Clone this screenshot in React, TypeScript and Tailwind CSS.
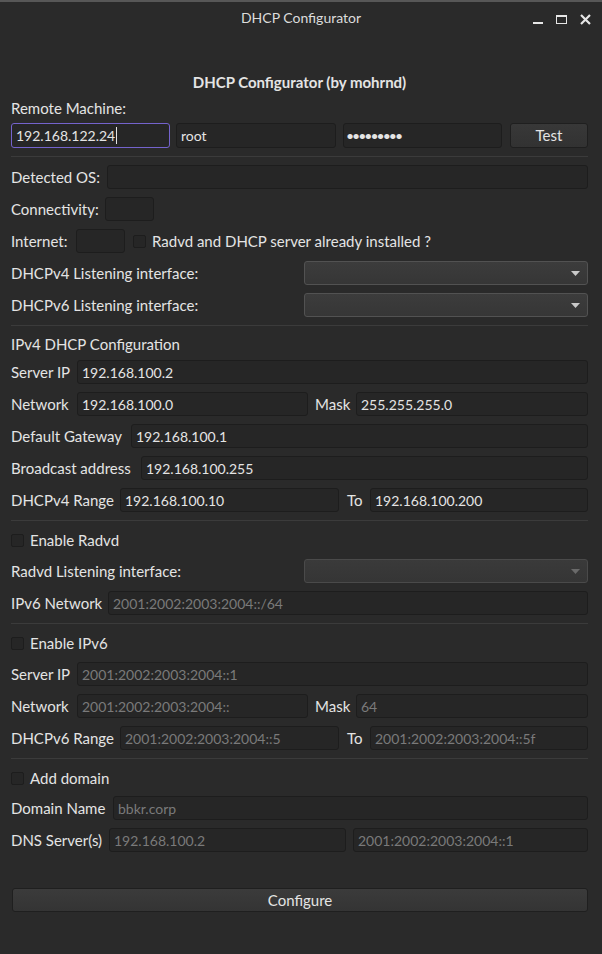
import React from "react";

const font = { fontFamily: "Lato, 'Noto Sans', sans-serif" };

const Field = ({
  value,
  disabled,
  className = "",
  focused,
}: {
  value?: string;
  disabled?: boolean;
  className?: string;
  focused?: boolean;
}) => (
  <div
    className={`h-[24px] rounded-[3px] border px-[4px] flex items-center text-[14px] whitespace-nowrap overflow-hidden bg-[#262626] ${
      focused ? "border-[#7463cc]" : "border-[#1d1d1d]"
    } ${disabled ? "text-[#7a7a7a]" : "text-[#e4e4e4]"} ${className}`}
  >
    {value}
    {focused && <span className="ml-px inline-block w-px h-[17px] bg-[#e4e4e4]" />}
  </div>
);

const Combo = ({ disabled }: { disabled?: boolean }) => (
  <div
    className={`w-[284px] h-[24px] rounded-[3px] border flex items-center justify-end pr-[7px] ${
      disabled
        ? "border-[#4a4a4a] bg-gradient-to-b from-[#3a3a3a] to-[#353535]"
        : "border-[#525252] bg-gradient-to-b from-[#3c3c3c] to-[#363636]"
    }`}
  >
    <svg width="9" height="5" viewBox="0 0 9 5">
      <path d="M0 0h9L4.5 5z" fill={disabled ? "#6a6a6a" : "#c9c9c9"} />
    </svg>
  </div>
);

const Check = ({ label }: { label: string }) => (
  <div className="h-[20px] flex items-center">
    <div className="w-[13px] h-[13px] rounded-[2px] border border-[#1d1d1d] bg-[#262626]" />
    <span className="ml-[6px] text-[15px] text-[#e4e4e4]">{label}</span>
  </div>
);

const Sep = ({ mt = "mt-[8px]" }: { mt?: string }) => (
  <div className={`${mt} h-px bg-[#3b3b3b]`} />
);

const Label = ({ text, w }: { text: string; w: string }) => (
  <span className={`${w} shrink-0 text-[15px] text-[#e4e4e4] whitespace-nowrap`}>{text}</span>
);

export default function App() {
  return (
    <div className="w-[602px] h-[954px] bg-[#2a2a2a] text-[#e4e4e4] overflow-hidden" style={font}>
      {/* title bar */}
      <div className="h-[34px] border-t-2 border-[#575757] relative flex items-center justify-center">
        <span className="text-[14px] text-[#dcdcdc] -mt-[2px]">DHCP Configurator</span>
        <div className="absolute right-[11px] top-[11px] flex items-center gap-[13px]">
          <div className="w-[10px] h-[12px] flex items-end pb-[1px]">
            <div className="w-[10px] h-[2px] bg-[#e6e6e6]" />
          </div>
          <div className="w-[11px] h-[9px] border border-[#e6e6e6] border-t-2" />
          <svg width="11" height="11" viewBox="0 0 11 11">
            <path d="M1 1l9 9M10 1l-9 9" stroke="#e6e6e6" strokeWidth="2.2" />
          </svg>
        </div>
      </div>

      <div className="px-[11px] pr-[14px] flex flex-col">
        <div className="mt-[37px] h-[20px] text-center text-[15px] font-bold">
          DHCP Configurator (by mohrnd)
        </div>
        <div className="mt-[6px] h-[20px] text-[15px]">Remote Machine:</div>
        <div className="mt-[6px] flex">
          <Field value="192.168.122.24" focused className="w-[159px] h-[25px]" />
          <Field value="root" className="ml-[6px] w-[160px] h-[25px]" />
          <Field value="•••••••••" className="ml-[7px] w-[159px] h-[25px] text-[9px] tracking-[-2px] pl-[2px]" />
          <div className="ml-[8px] w-[78px] h-[25px] rounded-[3px] border border-[#1f1f1f] bg-gradient-to-b from-[#383838] to-[#323232] flex items-center justify-center text-[15px]">
            Test
          </div>
        </div>
        <Sep />

        <div className="mt-[8px] flex items-center">
          <Label text="Detected OS:" w="w-[96px]" />
          <Field className="flex-1" />
        </div>
        <div className="mt-[8px] flex items-center">
          <Label text="Connectivity:" w="w-[94px]" />
          <Field className="w-[49px]" />
        </div>
        <div className="mt-[8px] flex items-center">
          <Label text="Internet:" w="w-[65px]" />
          <Field className="w-[49px]" />
          <div className="ml-[8px]">
            <Check label="Radvd and DHCP server already installed ?" />
          </div>
        </div>
        <div className="mt-[8px] flex items-center">
          <span className="flex-1 text-[15px]">DHCPv4 Listening interface:</span>
          <Combo />
        </div>
        <div className="mt-[8px] flex items-center">
          <span className="flex-1 text-[15px]">DHCPv6 Listening interface:</span>
          <Combo />
        </div>
        <Sep />

        <div className="mt-[7px] h-[20px] text-[15px]">IPv4 DHCP Configuration</div>
        <div className="mt-[7px] flex items-center">
          <Label text="Server IP" w="w-[66px]" />
          <Field value="192.168.100.2" className="flex-1" />
        </div>
        <div className="mt-[8px] flex items-center">
          <Label text="Network" w="w-[66px]" />
          <Field value="192.168.100.0" className="w-[231px]" />
          <Label text="Mask" w="w-[48px] pl-[7px]" />
          <Field value="255.255.255.0" className="flex-1" />
        </div>
        <div className="mt-[8px] flex items-center">
          <Label text="Default Gateway" w="w-[120px]" />
          <Field value="192.168.100.1" className="flex-1" />
        </div>
        <div className="mt-[8px] flex items-center">
          <Label text="Broadcast address" w="w-[130px]" />
          <Field value="192.168.100.255" className="flex-1" />
        </div>
        <div className="mt-[8px] flex items-center">
          <Label text="DHCPv4 Range" w="w-[109px]" />
          <Field value="192.168.100.10" className="w-[219px]" />
          <Label text="To" w="w-[31px] pl-[8px]" />
          <Field value="192.168.100.200" className="flex-1" />
        </div>
        <Sep />

        <div className="mt-[9px]">
          <Check label="Enable Radvd" />
        </div>
        <div className="mt-[9px] flex items-center">
          <span className="flex-1 text-[15px]">Radvd Listening interface:</span>
          <Combo disabled />
        </div>
        <div className="mt-[8px] flex items-center">
          <Label text="IPv6 Network" w="w-[97px]" />
          <Field value="2001:2002:2003:2004::/64" disabled className="flex-1" />
        </div>
        <Sep />

        <div className="mt-[9px]">
          <Check label="Enable IPv6" />
        </div>
        <div className="mt-[9px] flex items-center">
          <Label text="Server IP" w="w-[66px]" />
          <Field value="2001:2002:2003:2004::1" disabled className="flex-1" />
        </div>
        <div className="mt-[8px] flex items-center">
          <Label text="Network" w="w-[66px]" />
          <Field value="2001:2002:2003:2004::" disabled className="w-[231px]" />
          <Label text="Mask" w="w-[48px] pl-[7px]" />
          <Field value="64" disabled className="flex-1" />
        </div>
        <div className="mt-[8px] flex items-center">
          <Label text="DHCPv6 Range" w="w-[109px]" />
          <Field value="2001:2002:2003:2004::5" disabled className="w-[219px]" />
          <Label text="To" w="w-[31px] pl-[8px]" />
          <Field value="2001:2002:2003:2004::5f" disabled className="flex-1" />
        </div>
        <Sep />

        <div className="mt-[9px]">
          <Check label="Add domain" />
        </div>
        <div className="mt-[8px] flex items-center">
          <Label text="Domain Name" w="w-[102px]" />
          <Field value="bbkr.corp" disabled className="flex-1" />
        </div>
        <div className="mt-[8px] flex items-center">
          <Label text="DNS Server(s)" w="w-[98px]" />
          <Field value="192.168.100.2" disabled className="w-[237px]" />
          <Field value="2001:2002:2003:2004::1" disabled className="ml-[7px] flex-1" />
        </div>

        <div className="mt-[36px] ml-px h-[24px] rounded-[3px] border border-[#1f1f1f] bg-gradient-to-b from-[#3b3b3b] to-[#343434] flex items-center justify-center text-[15px]">
          Configure
        </div>
      </div>
    </div>
  );
}
